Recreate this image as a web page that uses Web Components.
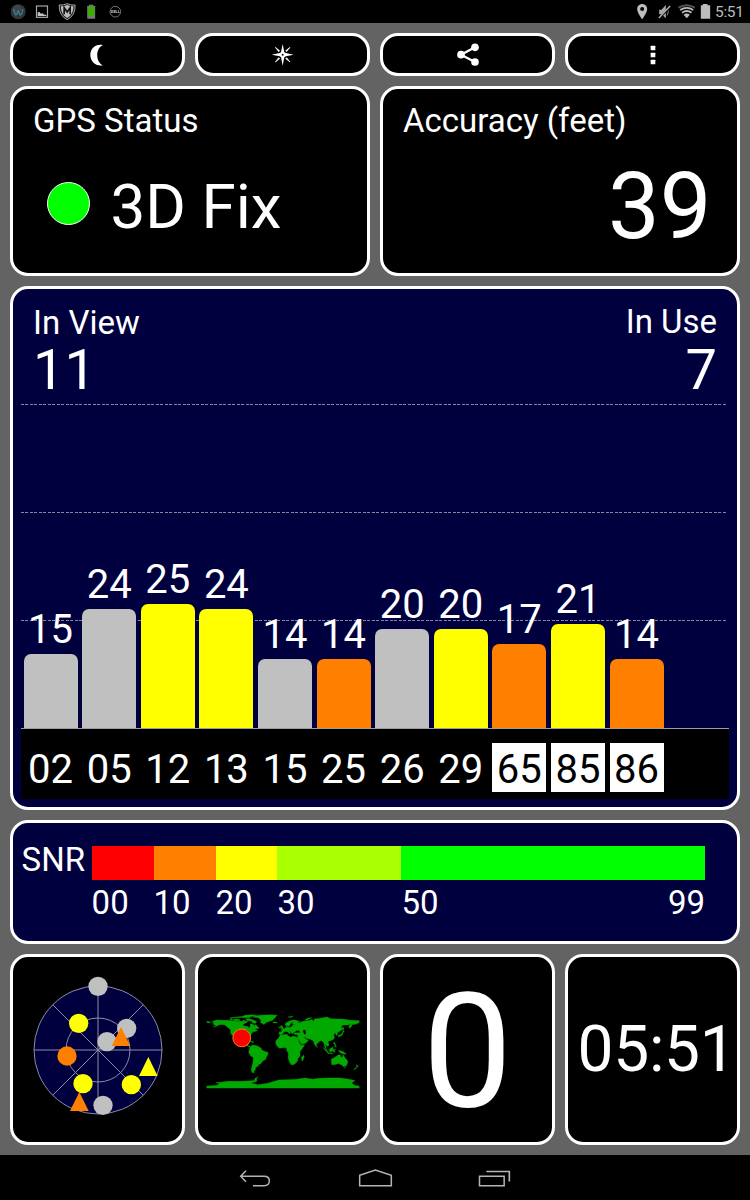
<!DOCTYPE html>
<html lang="en">
<head>
<meta charset="utf-8">
<title>GPS Status</title>
<style>
    body {
        margin: 0;
        background: #000;
        color: #fff;
        font-family: Roboto, "Noto Sans", sans-serif;
    }
</style>
</head>
<body>
<gps-app></gps-app>

<script>
// every icon: [viewBox, width in px, markup]
const ICONS = {
    globe: ['17.5 0 73 69', 24.33, `
        <circle cx="54" cy="35" r="22.5" fill="#343638"/>
        <circle cx="52" cy="27" r="13" fill="#4b4e50" opacity=".6"/>
        <path d="M40 27q4 16 7 18q5-2 7-14q3 13 7 14q5-3 7-18" fill="none" stroke="#397f91" stroke-width="4"/>`],
    photo: ['90 0 73 69', 24.33, `
        <rect x="109.500" y="18" width="33" height="34" fill="none" stroke="#aaa" stroke-width="3.500"/>
        <path d="M113 48V37l5-1 5 5 6-1 3 4h7v4z" fill="#c4c4c4"/>`],
    shield: ['163.5 0 73 69', 24.33, `
        <path d="M176 15q14 1 24-4q10 5 24 4q1 32-24 44q-25-12-24-44z" fill="#222" stroke="#bbb" stroke-width="2.500"/>
        <path d="M181 19q11 0 19-4q8 4 19 4q0 25-19 35q-19-10-19-35z" fill="#bdbdbd"/>
        <path d="M191 43V23l9 13 9-13v20" fill="none" stroke="#111" stroke-width="5"/>`],
    phone: ['236.5 0 73 69', 24.33, `
        <rect x="267" y="14" width="12" height="4" fill="#777"/>
        <rect x="261" y="17" width="24" height="39" rx="2" fill="#777"/>
        <rect x="264" y="19" width="18" height="29" fill="#3bad00"/>`],
    dell: ['308.5 0 73 69', 24.33, `
        <circle cx="345.500" cy="35" r="16" fill="none" stroke="#8a8a8a" stroke-width="2.500"/>
        <text x="345.500" y="39" text-anchor="middle" textLength="27" lengthAdjust="spacingAndGlyphs" font-size="11" font-weight="700" fill="#ccc">DELL</text>`],
    pin: ['88.5 0 73 69', 24.33, `
        <path fill-rule="evenodd" d="M125 12c-9 0-15 7-15 15c0 11 15 31 15 31s15-20 15-31c0-8-6-15-15-15zm0 9a6 6 0 110 12a6 6 0 010-12z" fill="#bcbcbc"/>`],
    mute: ['161.5 0 63 69', 21, `
        <path d="M177 29h7l13-14v40l-13-12h-7z" fill="#a9a9a9"/>
        <path d="M201 25q7 10 0 21" fill="none" stroke="#8b8b8b" stroke-width="3"/>
        <path d="M178 55l33-37" stroke="#000" stroke-width="6"/>
        <path d="M176 54l34-36" stroke="#b3b3b3" stroke-width="4"/>`],
    wifi: ['224.5 0 68 69', 22.67, `
        <path d="M235 23q24-15 49 0" fill="none" stroke="#555" stroke-width="6"/>
        <path d="M240 30q20-13 39 0M246 38q14-10 28 0" fill="none" stroke="#bcbcbc" stroke-width="5.500"/>
        <path d="M250 44q10-7 19 0l-9 11z" fill="#bcbcbc"/>`],
    battery: ['292.5 0 51 69', 17, `
        <path d="M307 12h14v4h8v40h-28V16h6z" fill="#bcbcbc"/>`],
    moon: ['60 30 80 66', 26.67, `
        <path d="M117 33C95 28 79 44 79 63s16 35 38 31C94 84 94 43 117 33z" fill="#fff"/>`],
    compass: ['60 65 76 76', 25.33, `
        <path fill-rule="evenodd" d="M98 71l5 25 5 2 23 5-23 5-5 3-5 25-5-25-4-3-24-5 24-5 4-2zM98 100a3 3 0 100 6a3 3 0 000-6z" fill="#fff"/>
        <path d="M76 81l13 10-3 3zM120 81l-13 10 3 3zM76 125l13-10-3-3zM120 125l-13-10 3-3z" fill="#fff" stroke="#fff" stroke-width="2"/>`],
    share: ['610 62 78 82', 26, `
        <path d="M670 81l-42 22 42 22" fill="none" stroke="#fff" stroke-width="7"/>
        <circle cx="670" cy="81" r="11.500" fill="#fff"/>
        <circle cx="628" cy="103" r="11.500" fill="#fff"/>
        <circle cx="670" cy="125" r="11.500" fill="#fff"/>`],
    more: ['138 130 42 66', 14, `
        <g fill="#fff">
            <rect x="152" y="135" width="14" height="14" rx="2"/>
            <rect x="152" y="156" width="14" height="14" rx="2"/>
            <rect x="152" y="177" width="14" height="14" rx="2"/>
        </g>`],
    back: ['55 40 100 60', 33.33, `
        <path d="M79 48L63 65l16 16M63 65h70q16 0 16 14t-16 14h-33" fill="none" stroke="#b4b4b4" stroke-width="4.500"/>`],
    home: ['410 40 110 60', 36.67, `
        <path d="M418 93.500V62l47-16 48 16v31.500z" fill="none" stroke="#b4b4b4" stroke-width="4.500"/>`],
    recents: ['775 40 106 60', 35.33, `
        <path d="M782.500 65h74v28.500h-74z" fill="none" stroke="#b4b4b4" stroke-width="4.500"/>
        <path d="M803 50.500h69v30" fill="none" stroke="#b4b4b4" stroke-width="5"/>`],
};

class GpsIcon extends HTMLElement {
    connectedCallback() {
        const [box, width, body] = ICONS[this.getAttribute('name')];
        this.attachShadow({ mode: 'open' }).innerHTML = `
            <style>
                :host { display: block; flex: none; }
                svg { display: block; }
            </style>
            <svg width="${width}" height="${box.split(' ')[3] / 3}" viewBox="${box}">${body}</svg>
        `;
    }
}

class GpsPanel extends HTMLElement {
    connectedCallback() {
        this.attachShadow({ mode: 'open' }).innerHTML = `
            <style>
                :host {
                    display: flex;
                    flex-direction: column;
                    box-sizing: border-box;
                    min-width: 0;
                    border: 3px solid #fff;
                    border-radius: 18px;
                    background: #000;
                    overflow: hidden;
                }
                :host([navy]) { background: #00003f; }
                :host([center]) { align-items: center; justify-content: center; }
            </style>
            <slot></slot>
        `;
    }
}

class StatusBar extends HTMLElement {
    connectedCallback() {
        this.attachShadow({ mode: 'open' }).innerHTML = `
            <style>
                :host {
                    display: flex;
                    height: 23px;
                    padding: 0 7px 0 6px;
                    background: #000;
                    justify-content: space-between;
                }
                div { display: flex; }
                time {
                    font-size: 15.5px;
                    line-height: 24px;
                    letter-spacing: -0.3px;
                    color: #bcbcbc;
                    width: 28px;
                }
            </style>
            <div>
                <gps-icon name="globe"></gps-icon>
                <gps-icon name="photo"></gps-icon>
                <gps-icon name="shield"></gps-icon>
                <gps-icon name="phone"></gps-icon>
                <gps-icon name="dell"></gps-icon>
            </div>
            <div>
                <gps-icon name="pin"></gps-icon>
                <gps-icon name="mute"></gps-icon>
                <gps-icon name="wifi"></gps-icon>
                <gps-icon name="battery"></gps-icon>
                <time>5:51</time>
            </div>
        `;
    }
}

class NavBar extends HTMLElement {
    connectedCallback() {
        this.attachShadow({ mode: 'open' }).innerHTML = `
            <style>
                :host { display: flex; justify-content: center; height: 45px; background: #000; }
                span { width: 120px; display: flex; justify-content: center; padding-top: 13px; box-sizing: border-box; }
            </style>
            <span><gps-icon name="back"></gps-icon></span>
            <span><gps-icon name="home"></gps-icon></span>
            <span><gps-icon name="recents"></gps-icon></span>
        `;
    }
}

const GREY = '#c0c0c0';
const YELLOW = '#ffff00';
const ORANGE = '#ff8000';

const SATELLITES = [
    { id: '02', snr: 15, color: GREY },
    { id: '05', snr: 24, color: GREY },
    { id: '12', snr: 25, color: YELLOW },
    { id: '13', snr: 24, color: YELLOW },
    { id: '15', snr: 14, color: GREY },
    { id: '25', snr: 14, color: ORANGE },
    { id: '26', snr: 20, color: GREY },
    { id: '29', snr: 20, color: YELLOW },
    { id: '65', snr: 17, color: ORANGE, glonass: true },
    { id: '85', snr: 21, color: YELLOW, glonass: true },
    { id: '86', snr: 14, color: ORANGE, glonass: true },
];

class SignalChart extends HTMLElement {
    connectedCallback() {
        const bars = SATELLITES.map(s => `
            <div class="slot">
                <span>${s.snr}</span>
                <i style="height:${(s.snr * 4.97 - 0.6).toFixed(1)}px;background:${s.color}"></i>
            </div>`).join('');
        const ids = SATELLITES.map(s => `
            <div class="slot"><b class="${s.glonass ? 'glonass' : ''}">${s.id}</b></div>`).join('');

        this.attachShadow({ mode: 'open' }).innerHTML = `
            <style>
                :host { display: block; margin: 0 8px 0 8.3px; font-size: 40px; }
                .plot { display: grid; height: 325px; box-sizing: border-box; border-bottom: 1px solid #9a9aa8; }
                .lines, .bars { grid-area: 1 / 1; display: flex; }
                .lines { flex-direction: column; }
                .lines hr {
                    margin: 0 0 107px;
                    border: 0;
                    height: 1px;
                    width: 706px;
                    background: repeating-linear-gradient(90deg, #8585a3 0 2.6px, transparent 2.6px 4.5px);
                }
                .bars { align-items: flex-end; z-index: 1; }
                .slot { width: 58.6px; flex: none; display: flex; flex-direction: column; align-items: center; }
                .slot span { line-height: 40px; margin-bottom: 4.5px; }
                .slot i { width: 54px; border-radius: 7px 7px 0 0; }
                .ids { display: flex; height: 70px; background: #000; align-items: flex-start; box-sizing: border-box; padding-top: 14px; }
                .ids b { width: 54px; height: 49px; line-height: 54px; font-weight: 400; text-align: center; }
                .ids b.glonass { background: #fff; color: #000; }
            </style>
            <div class="plot">
                <div class="lines"><hr><hr><hr></div>
                <div class="bars">${bars}</div>
            </div>
            <div class="ids">${ids}</div>
        `;
    }
}

class SnrScale extends HTMLElement {
    connectedCallback() {
        this.attachShadow({ mode: 'open' }).innerHTML = `
            <style>
                :host { display: flex; padding: 23px 32px 0 8.6px; font-size: 33px; line-height: 34px; }
                .name { width: 70px; flex: none; line-height: 28px; }
                .scale { flex: 1; }
                .row { display: flex; }
                .row > * { flex-basis: 0; min-width: 0; white-space: nowrap; }
                .colors { height: 34px; }
                .labels { padding-top: 6px; }
                .last { display: flex; justify-content: space-between; }
            </style>
            <div class="name">SNR</div>
            <div class="scale">
                <div class="row colors">
                    <div style="flex-grow:10;background:#f00"></div>
                    <div style="flex-grow:10;background:#ff8000"></div>
                    <div style="flex-grow:10;background:#ff0"></div>
                    <div style="flex-grow:20;background:#af0"></div>
                    <div style="flex-grow:49;background:#0f0"></div>
                </div>
                <div class="row labels">
                    <div style="flex-grow:10">00</div>
                    <div style="flex-grow:10">10</div>
                    <div style="flex-grow:10">20</div>
                    <div style="flex-grow:20">30</div>
                    <div class="last" style="flex-grow:49"><span>50</span><span>99</span></div>
                </div>
            </div>
        `;
    }
}

class SkyPlot extends HTMLElement {
    connectedCallback() {
        const dot = (x, y, c) => `<circle cx="${x}" cy="${y}" r="29" fill="${c}"/>`;
        const tri = (x, y, c) => `<path d="M${x} ${y}l28 57h-56z" fill="${c}"/>`;
        this.attachShadow({ mode: 'open' }).innerHTML = `
            <style>:host, svg { display: block; }</style>
            <svg width="150" height="150" viewBox="37 75 450 450">
                <circle cx="262" cy="300" r="192" fill="#00003f"/>
                <g fill="none" stroke="#8c8ca6" stroke-width="3">
                    <circle cx="262" cy="300" r="192"/>
                    <circle cx="262" cy="300" r="96"/>
                    <path d="M262 108v384M70 300h384M126 164l272 272M398 164L126 436"/>
                </g>
                ${dot(262, 109, GREY)}
                ${dot(348, 235, GREY)}
                ${dot(289, 275, GREY)}
                ${dot(277, 466, GREY)}
                ${dot(204, 220, YELLOW)}
                ${dot(217, 401, YELLOW)}
                ${dot(362, 404, YELLOW)}
                ${dot(169, 318, ORANGE)}
                ${tri(331, 231, ORANGE)}
                ${tri(413, 321, YELLOW)}
                ${tri(206, 426, ORANGE)}
            </svg>
        `;
    }
}

// coastlines as longitude,latitude pairs
const LAND = [
    // north and central america
    '-166,68 -156,71 -141,70 -128,70 -120,69 -108,68 -96,68 -93,71 -88,68 -82,68 -86,65 -94,61 -94,58 -88,56 -82,55 -80,51 -78,55 -77,58 -78,62 -71,61 -68,58 -64,60 -60,55 -56,52 -60,50 -66,50 -64,48 -60,46 -66,44 -70,43 -74,40 -76,35 -81,31 -80,25 -83,29 -90,29 -97,27 -97,21 -94,18 -91,19 -90,21 -87,21 -88,16 -83,15 -83,10 -79,9 -77,8 -80,7 -85,10 -91,14 -97,16 -105,20 -109,26 -114,31 -110,23 -115,28 -117,33 -122,37 -124,43 -124,48 -131,54 -137,59 -146,60 -152,59 -158,56 -165,54 -158,58 -164,60 -165,63 -161,65 -168,66',
    // baffin, victoria, ellesmere
    '-88,73 -80,74 -70,71 -62,67 -65,63 -72,64 -74,68 -86,70',
    '-118,72 -110,73 -102,72 -102,69 -115,69',
    '-125,76 -114,76 -100,77 -92,76 -80,76 -76,79 -62,82 -75,83 -90,82 -97,79 -110,78',
    '-125,74 -120,74 -118,72 -124,71',
    // greenland
    '-72,78 -58,76 -52,70 -53,65 -45,60 -40,65 -25,70 -20,75 -14,82 -30,83 -55,82 -67,80',
    // south america
    '-77,8 -72,12 -62,10 -52,5 -50,0 -44,-3 -35,-6 -36,-11 -39,-16 -41,-22 -48,-26 -53,-33 -58,-34 -58,-38 -62,-39 -65,-43 -66,-47 -69,-51 -68,-54 -73,-53 -75,-47 -73,-38 -71,-30 -70,-18 -76,-14 -81,-6 -80,0',
    // caribbean
    '-84,22 -79,23 -74,20 -78,20', '-73,20 -69,19 -71,18 -74,18',
    // africa
    '-17,15 -17,21 -10,29 -6,36 0,36 10,37 11,34 19,30 23,33 32,31 36,24 39,16 43,11 51,12 46,4 40,-4 40,-15 35,-20 35,-24 32,-29 26,-34 19,-35 15,-27 12,-18 13,-8 9,-1 9,4 2,6 -8,4 -13,8',
    '44,-25 47,-25 50,-16 49,-12 44,-17',
    // europe and asia
    '-9,37 -9,43 -2,43 -4,48 2,50 8,54 8,57 11,54 19,54 22,58 30,60 24,60 22,63 25,65 22,66 17,61 16,57 13,56 8,58 5,59 6,63 12,67 20,70 28,71 40,67 34,66 38,64 44,67 54,69 60,69 68,72 73,68 74,73 87,75 104,78 113,74 127,73 140,73 160,70 180,69 180,65 172,61 163,60 162,56 157,51 156,58 163,62 153,59 142,59 136,54 141,53 140,48 132,43 128,40 129,36 126,34 125,39 118,39 122,37 119,35 122,30 119,25 110,21 106,20 109,12 105,9 100,13 103,1 98,9 97,17 91,22 87,21 80,15 78,8 74,14 72,21 66,25 57,27 51,30 48,30 56,25 60,22 53,16 44,13 39,21 34,28 35,36 27,37 26,40 41,41 38,46 31,46 28,42 23,40 22,37 19,42 13,46 18,40 16,38 10,44 3,43 0,39 -5,36',
    // british isles, iceland, svalbard, novaya zemlya
    '-5,50 1,51 0,54 -3,58 -6,57 -4,54', '-10,52 -6,52 -6,55 -9,54',
    '-24,65 -22,66 -14,66 -15,64 -22,64', '12,78 24,80 18,77', '52,71 58,71 68,77 58,75',
    // japan, sakhalin, taiwan
    '130,31 136,33 141,36 141,41 145,43 142,46 139,38 131,34', '142,46 144,50 142,54',
    // indonesia, philippines, new guinea
    '95,6 106,-3 105,-6 99,0', '105,-6 114,-7 119,-9 106,-8', '109,1 117,7 119,1 116,-4 110,-3',
    '119,1 125,2 121,0 123,-5 119,-5', '120,18 122,18 126,7 122,8 124,12 120,14',
    '131,-1 141,-3 148,-8 150,-10 143,-9 138,-8 133,-4',
    // sri lanka
    '80,9 82,7 80,6',
    // australia, tasmania and new zealand
    '114,-22 122,-18 130,-12 136,-12 136,-16 140,-17 142,-11 146,-18 153,-26 152,-33 149,-38 143,-39 138,-35 131,-32 124,-34 115,-35',
    '145,-41 148,-41 147,-43', '173,-35 178,-38 175,-41', '172,-41 174,-42 167,-47',
    // aleutians
    '-179,68 -171,66 -175,64 -180,65',
    // antarctica
    '-180,-90 -180,-85 -158,-84 -150,-80 -158,-77 -146,-76 -130,-74 -103,-74 -80,-73 -68,-72 -66,-67 -58,-63 -62,-67 -62,-74 -76,-78 -60,-82 -38,-79 -20,-74 -10,-71 10,-70 32,-69 52,-66 70,-69 85,-67 110,-66 135,-66 155,-69 170,-72 162,-78 170,-84 180,-85 180,-90',
];

class WorldMap extends HTMLElement {
    connectedCallback() {
        this.attachShadow({ mode: 'open' }).innerHTML = `
            <style>:host, svg { display: block; }</style>
            <svg width="160" height="80" viewBox="-189 -94 378 188">
                <g transform="scale(1 -1)">
                    <g fill="#00a800" stroke="#00a800" stroke-width="1">
                        ${LAND.map(p => `<polygon points="${p}"/>`).join('')}
                    </g>
                    <g fill="#000">
                        <polygon points="47,46 53,47 54,37 50,37"/>
                        <polygon points="-90,48 -84,46 -82,42 -87,42"/>
                    </g>
                    <circle cx="-97.5" cy="28.7" r="21" fill="#f00" stroke="#f08c00" stroke-width="2.2"/>
                </g>
            </svg>
        `;
    }
}

class GpsApp extends HTMLElement {
    connectedCallback() {
        this.attachShadow({ mode: 'open' }).innerHTML = `
            <style>
                ${this.getStyles()}
            </style>
            <status-bar></status-bar>
            <main>
                <gps-panel center><gps-icon name="moon"></gps-icon></gps-panel>
                <gps-panel center><gps-icon name="compass"></gps-icon></gps-panel>
                <gps-panel center><gps-icon name="share"></gps-icon></gps-panel>
                <gps-panel center><gps-icon name="more"></gps-icon></gps-panel>

                <gps-panel class="half">
                    <div class="title">GPS Status</div>
                    <div class="fix"><i></i>3D Fix</div>
                </gps-panel>
                <gps-panel class="half">
                    <div class="title">Accuracy (feet)</div>
                    <div class="accuracy">39</div>
                </gps-panel>

                <gps-panel navy class="full">
                    <div class="counts">
                        <div>In View<b>11</b></div>
                        <div class="right"><span>In Use</span><b>7</b></div>
                    </div>
                    <signal-chart></signal-chart>
                </gps-panel>

                <gps-panel navy class="full"><snr-scale></snr-scale></gps-panel>

                <gps-panel center><sky-plot></sky-plot></gps-panel>
                <gps-panel center><world-map></world-map></gps-panel>
                <gps-panel center><div class="speed">0</div></gps-panel>
                <gps-panel center><div class="clock">05:51</div></gps-panel>
            </main>
            <nav-bar></nav-bar>
        `;
    }

    getStyles() {
        return `
        :host {
            display: flex;
            flex-direction: column;
            width: 750px;
            height: 1200px;
            overflow: hidden;
        }

        main {
            height: 1132px;
            box-sizing: border-box;
            padding: 10px 10px 0;
            background: #636363;
            display: grid;
            grid-template-columns: repeat(4, 1fr);
            grid-template-rows: 43px 190px 524px 124px 191px;
            gap: 10px;
        }

        .half { grid-column: span 2; }
        .full { grid-column: 1 / -1; }

        .title {
            font-size: 33px;
            line-height: 40px;
            padding: 12px 20px 0;
        }

        .fix {
            display: flex;
            align-items: center;
            gap: 21px;
            margin: 30px 0 0 33.5px;
            font-size: 62px;
            line-height: 72px;
        }

        .fix i {
            width: 41px;
            height: 41px;
            border: 1px solid #fff;
            border-radius: 50%;
            background: #0f0;
            margin-bottom: 7px;
        }

        .accuracy {
            text-align: right;
            font-size: 92px;
            line-height: 100px;
            margin: 16px 25.5px 0 0;
        }

        .counts {
            display: flex;
            justify-content: space-between;
            height: 115px;
            box-sizing: border-box;
            padding: 14px 20px 0 20px;
            font-size: 33px;
            line-height: 40px;
        }

        .counts b {
            display: block;
            font-weight: 400;
            font-size: 56px;
            line-height: 56px;
            margin-top: -1px;
        }

        .right { text-align: right; }
        .right span { display: block; margin-top: -1px; padding-bottom: 1px; }

        .speed { font-size: 160px; line-height: 190px; padding-top: 4px; }
        .clock { font-size: 64px; line-height: 76px; letter-spacing: -0.3px; margin-left: 8px; }
        `;
    }
}

customElements.define('gps-icon', GpsIcon);
customElements.define('gps-panel', GpsPanel);
customElements.define('status-bar', StatusBar);
customElements.define('nav-bar', NavBar);
customElements.define('signal-chart', SignalChart);
customElements.define('snr-scale', SnrScale);
customElements.define('sky-plot', SkyPlot);
customElements.define('world-map', WorldMap);
customElements.define('gps-app', GpsApp);
</script>
</body>
</html>
